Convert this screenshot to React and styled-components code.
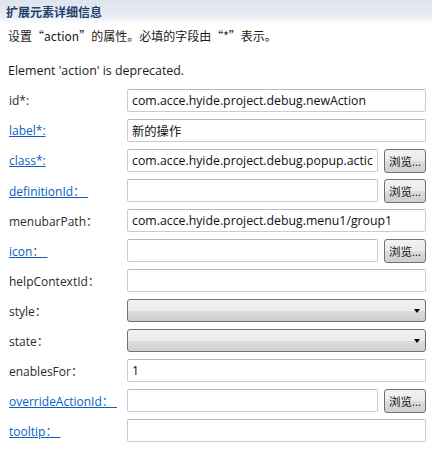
import React from "react";
import styled, { createGlobalStyle } from "styled-components";

const GlobalStyle = createGlobalStyle`
  body {
    margin: 0;
    background: #ffffff;
    font-family: "Open Sans", "Noto Sans CJK SC", sans-serif;
    font-size: 12px;
    color: #1a1a1a;
  }
`;

const Page = styled.div`
  width: 432px;
  height: 453px;
  background: #fff;
  overflow: hidden;
`;

const Header = styled.div`
  height: 24px;
  display: flex;
  align-items: center;
  padding-left: 6px;
  background: linear-gradient(to bottom, #dde4ee 0%, #e8ecf3 65%, #ffffff 100%);
  font-weight: bold;
  color: #23406d;
  font-size: 12px;
`;

const Description = styled.div`
  padding: 3px 0 0 8px;
  height: 18px;
  line-height: 18px;
  font-family: "Noto Sans CJK SC", sans-serif;
`;

const Notice = styled.div`
  padding: 17px 0 0 8px;
  height: 18px;
  line-height: 18px;
  font-size: 12.4px;
`;

const Form = styled.div`
  display: grid;
  grid-template-columns: 118px minmax(0, 1fr);
  row-gap: 7px;
  padding: 9px 6px 0 9px;
  align-items: center;
`;

const Label = styled.span`
  color: ${(p) => (p.$link ? "#0a5fc4" : "#2b2b2b")};
  text-decoration: ${(p) => (p.$link ? "underline" : "none")};
  white-space: pre;
  justify-self: start;
`;

const Field = styled.div`
  display: flex;
  gap: 6px;
  height: 23px;
  align-items: center;
  min-width: 0;
`;

const TextInput = styled.div`
  flex: 1;
  min-width: 0;
  height: 23px;
  box-sizing: border-box;
  border: 1px solid #c8ccd1;
  border-top-color: #b5b9be;
  border-radius: 2px;
  padding: 0 4px;
  display: flex;
  align-items: center;
  white-space: nowrap;
  overflow: hidden;
  color: #111;
  font-size: 12.3px;
`;

const Button = styled.div`
  flex: none;
  width: 42px;
  height: 24px;
  box-sizing: border-box;
  border: 1px solid #707070;
  border-radius: 3px;
  background: linear-gradient(to bottom, #f2f2f2 0%, #ebebeb 50%, #dddddd 51%, #cfcfcf 100%);
  display: flex;
  align-items: center;
  justify-content: center;
  font-size: 11.5px;
  color: #111;
`;

const Select = styled.div`
  flex: 1;
  height: 23px;
  box-sizing: border-box;
  border: 1px solid #707070;
  border-radius: 3px;
  background: linear-gradient(to bottom, #f2f2f2 0%, #ebebeb 50%, #dddddd 51%, #cfcfcf 100%);
  display: flex;
  align-items: center;
  justify-content: flex-end;
  padding-right: 5px;
`;

const Arrow = styled.span`
  width: 0;
  height: 0;
  border-left: 3.5px solid transparent;
  border-right: 3.5px solid transparent;
  border-top: 4px solid #000;
`;

const rows = [
  { label: "id*:", value: "com.acce.hyide.project.debug.newAction" },
  { label: "label*:", link: true, value: "新的操作" },
  { label: "class*:", link: true, value: "com.acce.hyide.project.debug.popup.actic", browse: true },
  { label: "definitionId： ", link: true, value: "", browse: true },
  { label: "menubarPath：", value: "com.acce.hyide.project.debug.menu1/group1" },
  { label: "icon： ", link: true, value: "", browse: true },
  { label: "helpContextId：", value: "" },
  { label: "style：", select: true },
  { label: "state：", select: true },
  { label: "enablesFor：", value: "1" },
  { label: "overrideActionId： ", link: true, value: "", browse: true },
  { label: "tooltip： ", link: true, value: "" },
];

export default function App() {
  return (
    <Page>
      <GlobalStyle />
      <Header>扩展元素详细信息</Header>
      <Description>设置“action”的属性。必填的字段由“*”表示。</Description>
      <Notice>Element 'action' is deprecated.</Notice>
      <Form>
        {rows.map((row) => (
          <React.Fragment key={row.label}>
            <Label $link={row.link}>{row.label}</Label>
            <Field>
              {row.select ? (
                <Select>
                  <Arrow />
                </Select>
              ) : (
                <TextInput>{row.value}</TextInput>
              )}
              {row.browse && <Button>浏览...</Button>}
            </Field>
          </React.Fragment>
        ))}
      </Form>
    </Page>
  );
}
